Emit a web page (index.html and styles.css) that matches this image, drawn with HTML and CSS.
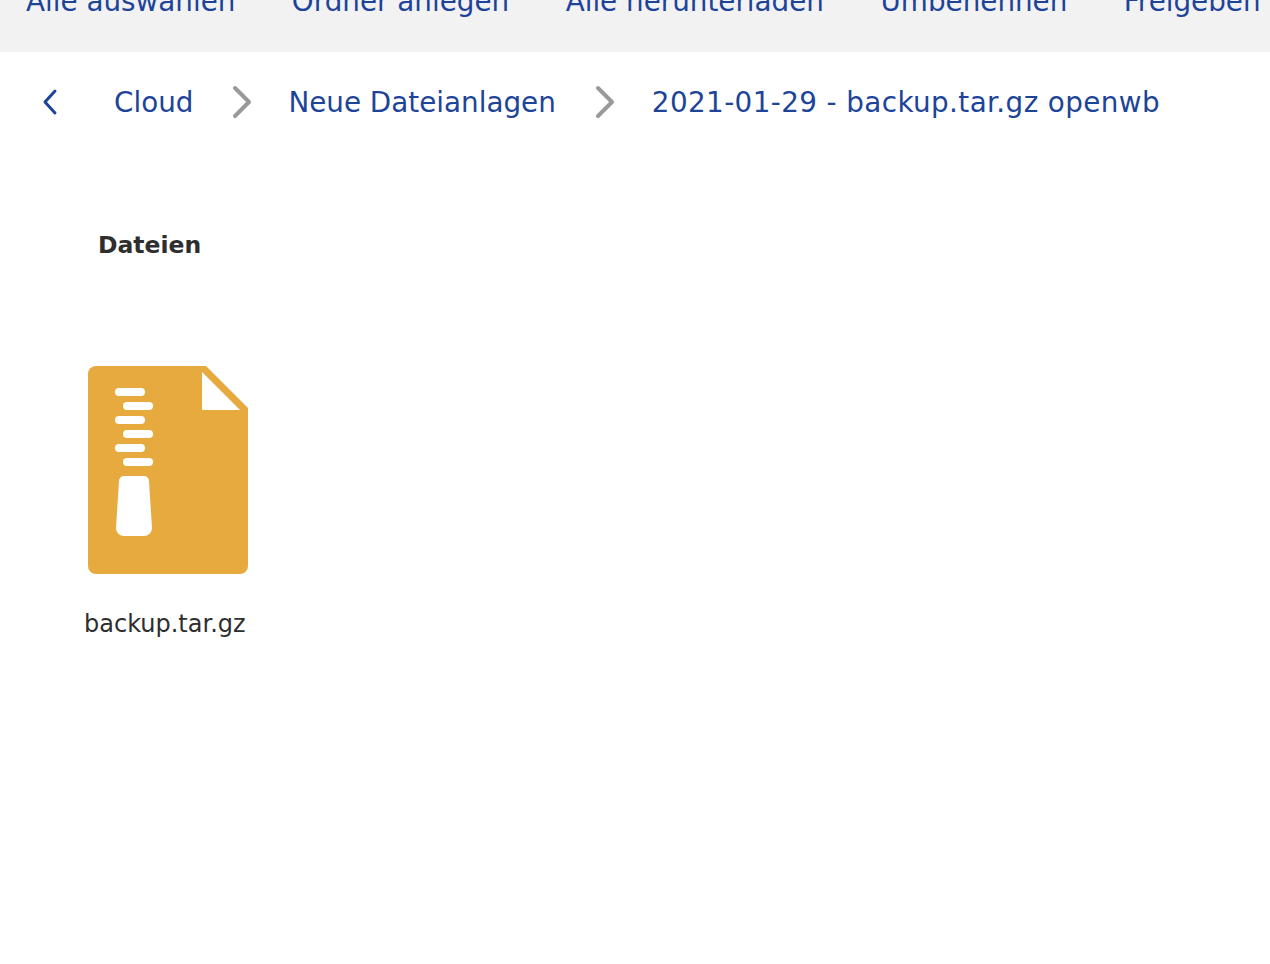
FILE: index.html
```html
<!DOCTYPE html>
<html lang="de">
<head>
<meta charset="utf-8">
<title>Cloud</title>
<link rel="stylesheet" href="styles.css">
</head>
<body>
<nav class="toolbar">
  <a>Alle auswählen</a>
  <a>Ordner anlegen</a>
  <a>Alle herunterladen</a>
  <a>Umbenennen</a>
  <a>Freigeben</a>
</nav>
<nav class="crumbs">
  <svg class="back" width="16" height="28" viewBox="0 0 16 28"><path d="M13 3 L3 14 L13 25" fill="none" stroke="#1d4499" stroke-width="3" stroke-linecap="round" stroke-linejoin="round"/></svg>
  <a class="first">Cloud</a>
  <svg class="sep" width="20" height="34" viewBox="0 0 20 34"><path d="M3 3 L17 17 L3 31" fill="none" stroke="#999" stroke-width="4" stroke-linecap="round" stroke-linejoin="round"/></svg>
  <a>Neue Dateianlagen</a>
  <svg class="sep" width="20" height="34" viewBox="0 0 20 34"><path d="M3 3 L17 17 L3 31" fill="none" stroke="#999" stroke-width="4" stroke-linecap="round" stroke-linejoin="round"/></svg>
  <a class="current">2021-01-29 - backup.tar.gz openwb</a>
</nav>
<main class="content">
  <h2>Dateien</h2>
  <figure class="file">
    <svg width="160" height="208" viewBox="0 0 160 208">
      <path d="M8 0 H118 L160 42 V200 a8 8 0 0 1 -8 8 H8 a8 8 0 0 1 -8 -8 V8 a8 8 0 0 1 8 -8 Z" fill="#e6aa3e"/>
      <path d="M114 6 L152 44 H114 Z" fill="#fff"/>
      <g fill="#fff">
        <rect x="27" y="22" width="30" height="8" rx="4"/>
        <rect x="35" y="36" width="30" height="8" rx="4"/>
        <rect x="27" y="50" width="30" height="8" rx="4"/>
        <rect x="35" y="64" width="30" height="8" rx="4"/>
        <rect x="27" y="78" width="30" height="8" rx="4"/>
        <rect x="35" y="92" width="30" height="8" rx="4"/>
        <path d="M36 110 H56 a5 5 0 0 1 5 5 L64 162 a8 8 0 0 1 -8 8 H36 a8 8 0 0 1 -8 -8 L31 115 a5 5 0 0 1 5 -5 Z"/>
      </g>
    </svg>
    <figcaption>backup.tar.gz</figcaption>
  </figure>
</main>
</body>
</html>
```
FILE: styles.css
```css
html, body { margin: 0; padding: 0; background: #fff; }
body { font-family: "DejaVu Sans", Verdana, sans-serif; overflow: hidden; height: 964px; }
a { color: #1d4499; }
.toolbar { display: flex; gap: 56.5px; height: 52px; background: #f2f2f2; padding-left: 26px; font-size: 27.8px; overflow: hidden; white-space: nowrap; align-items: flex-start; }
.toolbar a { line-height: 34px; margin-top: -15px; }
.crumbs { display: flex; align-items: center; height: 100px; font-size: 27.8px; white-space: nowrap; }
.back { margin-left: 42px; margin-right: 1px; }
.first { margin-left: 55px; }
.sep { margin: 0 36px 0 39px; }
.current { letter-spacing: 0.4px; margin-left: 1px; }
.content { padding-left: 98px; }
h2 { margin: 76px 0 0; font-size: 23.5px; line-height: 34px; color: #2e2e2e; font-weight: 700; }
.file { margin: 0; padding-left: 0; width: 180px; position: relative; left: -10px; margin-top: 104px; }
.file svg { display: block; }
figcaption { font-size: 24px; line-height: 30px; color: #2e2e2e; margin-top: 35px; margin-left: -4px; }
```
